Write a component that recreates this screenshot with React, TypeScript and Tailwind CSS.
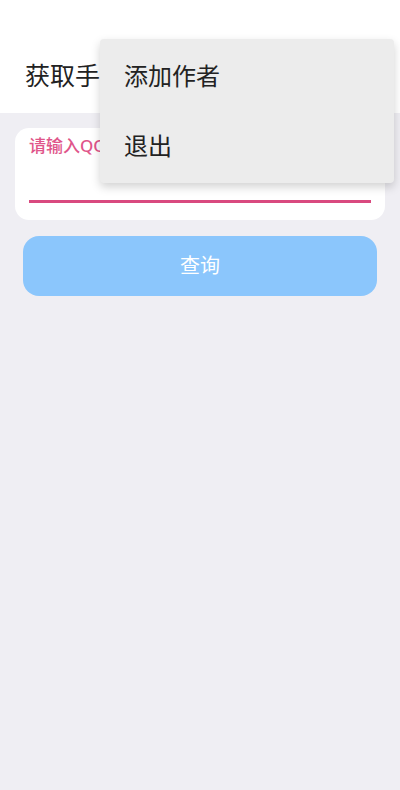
export default function App() {
  return (
    <div
      className="relative h-[790px] w-[400px] overflow-hidden bg-[#efeef3]"
      style={{ fontFamily: '"Noto Sans", "Noto Sans CJK SC", sans-serif' }}
    >
      <header className="flex h-[113px] items-end bg-white px-[25px] pb-[20px]">
        <h1 className="text-[25px] leading-[36px] text-[#222]">获取手机号</h1>
      </header>

      <div className="px-[15px] pt-[15px]">
        <div className="rounded-[14px] bg-white px-[14px] pb-[17px] pt-[6px]">
          <label className="block text-[17px] font-medium leading-[24px] text-[#e0558a]">
            请输入QQ号
          </label>
          <div className="h-[42px]" />
          <div className="h-[3px] bg-[#d9497f]" />
        </div>
        <button className="mx-[8px] mt-[16px] flex h-[60px] w-[354px] items-center justify-center rounded-[16px] bg-[#8bc6fc] text-[20px] text-white">
          查询
        </button>
      </div>

      <div className="absolute left-[100px] top-[39px] w-[294px] rounded-[4px] bg-[#ececec] py-[2px] shadow-[0_4px_10px_rgba(0,0,0,0.18)]">
        <div className="flex h-[70px] items-center px-[24px] text-[24px] text-[#222]">添加作者</div>
        <div className="flex h-[70px] items-center px-[24px] text-[24px] text-[#222]">退出</div>
      </div>
    </div>
  );
}
